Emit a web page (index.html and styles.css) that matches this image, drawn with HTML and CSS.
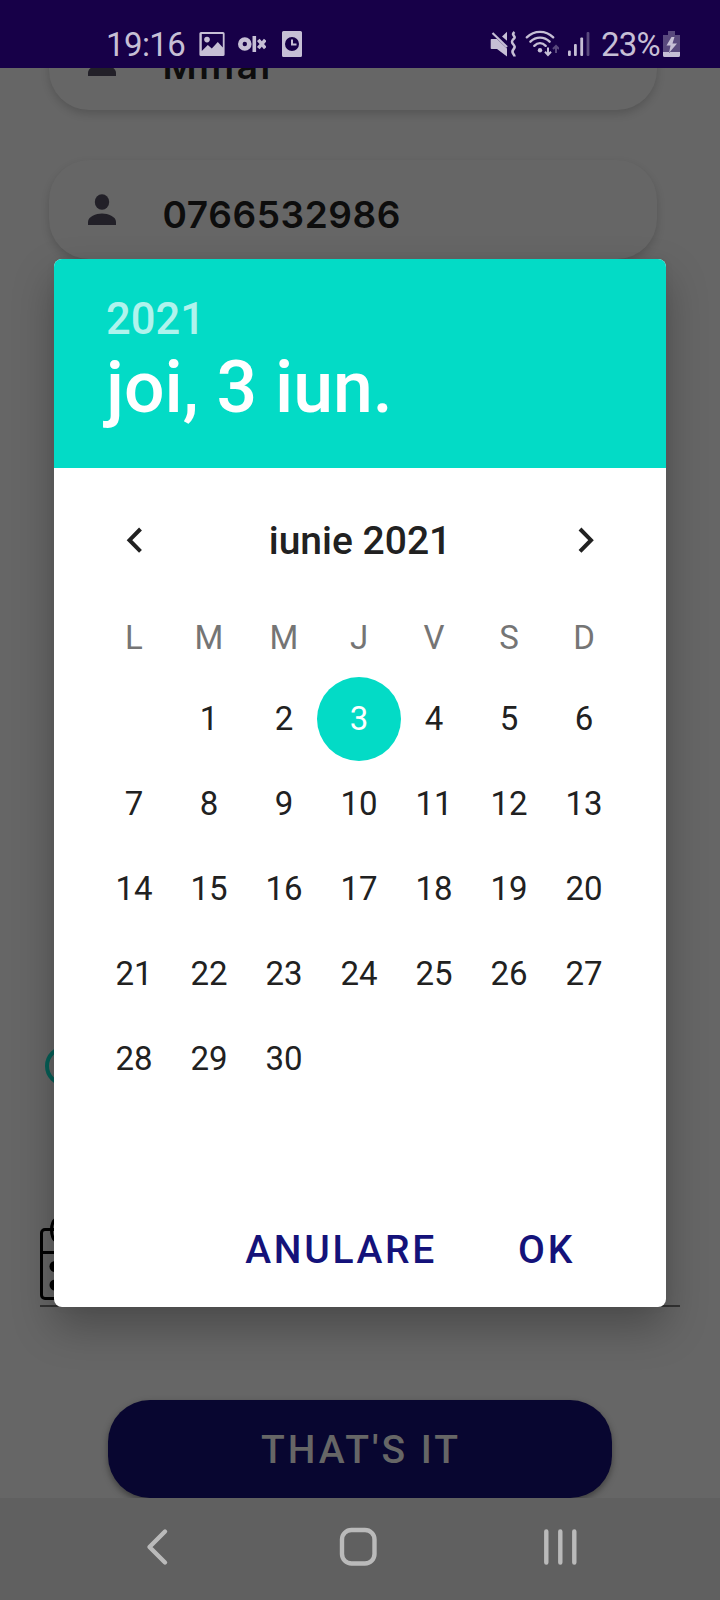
FILE: index.html
```html
<!DOCTYPE html>
<html lang="ro">
<head>
<meta charset="utf-8">
<title>iunie 2021</title>
<link rel="stylesheet" href="styles.css">
</head>
<body>
<div class="screen">
  <header class="status">
    <span class="clock">19:16</span>
    <svg class="st-picture" width="26" height="26" viewBox="0 0 26 26"><path fill-rule="evenodd" d="M2 1h22a1.6 1.6 0 0 1 1.600 1.600v20.800a1.600 1.600 0 0 1-1.600 1.600H2a1.600 1.600 0 0 1-1.600-1.600V2.600A1.600 1.600 0 0 1 2 1zm.800 2v17l6-6 4 3.600 6-6.600 5 5.500V3z"/><circle cx="8" cy="8.600" r="2.800"/></svg>
    <svg class="st-olx" width="28" height="18" viewBox="0 0 28 18"><circle cx="6.800" cy="9" r="4.500" fill="none" stroke="currentColor" stroke-width="4.600"/><path d="M14.500 1h3.600v16h-3.600z"/><path d="M20.300 4.800l7 8.400m0-8.400l-7 8.400" fill="none" stroke="currentColor" stroke-width="3.500"/></svg>
    <svg class="st-watch" width="20" height="26" viewBox="0 0 20 26"><path fill-rule="evenodd" d="M1.500 0h17A1.500 1.500 0 0 1 20 1.500v23a1.500 1.500 0 0 1-1.500 1.500h-17A1.500 1.500 0 0 1 0 24.500v-23A1.500 1.500 0 0 1 1.500 0zM10 6a7 7 0 1 0 0 14a7 7 0 0 0 0-14z"/><path d="M10 8.500v5h4.500" fill="none" stroke="currentColor" stroke-width="2"/></svg>
    <span class="spacer"></span>
    <svg class="st-mute" width="28" height="28" viewBox="0 0 28 28"><path d="M1.500 9h5.500L17 18.500V26.500L7 19H1.500a.8.8 0 0 1-.8-.8V9.800a.8.800 0 0 1 .8-.8zM12 6.500l5-4.700v9z"/><path d="M2.500 3l14.500 14" fill="none" stroke="currentColor" stroke-width="2.200"/><path d="M24.500 2c-4 3 1.500 4 0 6s-4 3-1.500 6 2 3 0 6 1.500 4 1.500 6.500" fill="none" stroke="currentColor" stroke-width="2.600"/></svg>
    <svg class="st-wifi" width="34" height="28" viewBox="0 0 34 28"><g fill="none" stroke="currentColor" stroke-width="2.400" stroke-linecap="round"><path d="M1.800 7.300c7.500-7.300 18.900-7.300 26.400 0M5.400 11.700c5.500-5.400 13.700-5.400 19.200 0M9.300 15.800c3.500-3.400 7.900-3.400 11.400 0"/></g><circle cx="15" cy="20.300" r="2.200"/><path d="M23 17.500v7.500m-3-3.200l3 3.200 3-3.200" fill="none" stroke="currentColor" stroke-width="2"/><path class="dim" d="M31 23v-7m-3 3l3-3 3 3" fill="none" stroke="currentColor" stroke-width="2"/></svg>
    <svg class="st-signal" width="22" height="26" viewBox="0 0 22 26"><rect y="19.500" width="2.800" height="5.500" rx="1"/><rect x="6" y="13" width="2.800" height="12" rx="1"/><rect x="12.300" y="6.500" width="2.800" height="18.500" rx="1"/><rect class="dim" x="18.600" y="1" width="2.800" height="24" rx="1"/></svg>
    <span class="percent">23%</span>
    <svg class="st-battery" width="18" height="26" viewBox="0 0 18 26"><path class="dim" d="M5 0h7v4h5v17H0V4h5z"/><path d="M0 21h17v3.500a1.500 1.500 0 0 1-1.500 1.500h-14A1.500 1.500 0 0 1 0 24.500zM8.500 6L3.500 14.500h4L6 22l8-9.500H9.500L11.500 6z"/></svg>
  </header>

  <main class="form">
    <div class="card">
      <svg class="person" width="30" height="34" viewBox="0 0 30 34"><ellipse cx="15" cy="9" rx="7.200" ry="7.800"/><path d="M1 32v-3c0-5.500 8-8.500 14-8.500s14 3 14 8.500v3z"/></svg>
      <span class="value name">Mihai</span>
    </div>
    <div class="card">
      <svg class="person" width="30" height="34" viewBox="0 0 30 34"><ellipse cx="15" cy="9" rx="7.200" ry="7.800"/><path d="M1 32v-3c0-5.500 8-8.500 14-8.500s14 3 14 8.500v3z"/></svg>
      <span class="value">0766532986</span>
    </div>
    <div class="radio"></div>
    <div class="date-field">
      <svg width="78" height="84" viewBox="0 0 78 84"><g fill="none" stroke="currentColor" stroke-width="3"><rect x="1.500" y="11.500" width="74" height="69" rx="3.500"/><path d="M2 34.500h74"/><ellipse cx="16" cy="12" rx="4.500" ry="10.500"/></g><circle cx="15" cy="48.500" r="5.500"/><circle cx="15" cy="67" r="5.500"/></svg>
    </div>
    <button class="submit">THAT'S IT</button>
  </main>

  <nav class="navbar">
    <svg width="40" height="40" viewBox="0 0 40 40"><path d="M28 4.500L12.500 20 28 35.500"/></svg>
    <svg width="40" height="40" viewBox="0 0 40 40"><rect x="3" y="3" width="32.500" height="33.500" rx="9.500"/></svg>
    <svg width="40" height="40" viewBox="0 0 40 40"><path d="M6.300 4.500v31M20.300 4.500v31M34.300 4.500v31"/></svg>
  </nav>

  <section class="dialog">
    <div class="banner">
      <div class="year">2021</div>
      <div class="date">joi, 3 iun.</div>
    </div>
    <div class="month">
      <svg width="20" height="28" viewBox="0 0 20 28"><path d="M17.500 3L6.500 14.200 17.500 25.400"/></svg>
      <span>iunie 2021</span>
      <svg width="20" height="28" viewBox="0 0 20 28"><path d="M3 3L14 14.200 3 25.400"/></svg>
    </div>
    <div class="grid weekdays"><span>L</span><span>M</span><span>M</span><span>J</span><span>V</span><span>S</span><span>D</span></div>
    <div class="grid days">
      <span></span><span>1</span><span>2</span><span class="selected">3</span><span>4</span><span>5</span><span>6</span>
      <span>7</span><span>8</span><span>9</span><span>10</span><span>11</span><span>12</span><span>13</span>
      <span>14</span><span>15</span><span>16</span><span>17</span><span>18</span><span>19</span><span>20</span>
      <span>21</span><span>22</span><span>23</span><span>24</span><span>25</span><span>26</span><span>27</span>
      <span>28</span><span>29</span><span>30</span>
    </div>
    <div class="actions"><button>ANULARE</button><button>OK</button></div>
  </section>
</div>
</body>
</html>
```
FILE: styles.css
```css
* { box-sizing: border-box; }
body { margin: 0; font-family: Roboto, sans-serif; }
button { border: 0; padding: 0; background: none; font: inherit; }
svg { display: block; flex: none; fill: currentColor; }

.screen {
  position: relative;
  display: flex;
  flex-direction: column;
  width: 720px;
  height: 1600px;
  overflow: hidden;
  background: #666;
}

/* Status bar */
.status {
  display: flex;
  align-items: center;
  flex: none;
  height: 68px;
  padding: 20px 39px 0 106px;
  background: #170048;
  color: #c6bfd5;
  font-size: 33px;
  line-height: 40px;
}
.clock { width: 93px; padding-top: 2px; letter-spacing: -.6px; }
.st-olx { margin-left: 13px; }
.st-watch { margin-left: 16px; }
.spacer { flex: 1; }
.st-wifi { margin-left: 7px; }
.st-signal { margin-left: 9px; }
.percent { margin-left: 11px; padding-top: 2px; width: 62px; white-space: nowrap; letter-spacing: -.8px; }
.dim { opacity: .38; }

/* Form behind the dialog */
.form {
  display: flex;
  flex-direction: column;
  flex: none;
  height: 1430px;
  overflow: hidden;
  padding: 0 40px;
}
.card {
  display: flex;
  align-items: center;
  flex: none;
  width: 608px;
  height: 99px;
  margin: 0 0 50px 8.5px;
  padding-left: 38px;
  border-radius: 40px;
  background: #666;
  box-shadow: 0 4px 8px rgba(0, 0, 0, .16);
}
.card:first-child { margin-top: -57px; }
.person { color: #222028; }
.value {
  margin: 10px 0 0 46px;
  color: #0d0d0d;
  font: 600 37px/44px Inter, sans-serif;
  letter-spacing: .6px;
}
.name { letter-spacing: 2.6px; }
.radio {
  flex: none;
  width: 40px;
  height: 40px;
  margin: 737px 0 0 5px;
  border: 4px solid #065f57;
  border-radius: 50%;
}
.date-field {
  flex: none;
  height: 89px;
  margin-top: 132px;
  border-bottom: 2px solid #333;
  color: #000;
}
.submit {
  flex: none;
  height: 98px;
  margin: 93px 68px 0;
  padding-top: 2px;
  border-radius: 42px;
  background: #080630;
  color: #666;
  font-size: 39px;
  font-weight: 500;
  letter-spacing: 3px;
  text-indent: 2px;
  box-shadow: 0 3px 7px rgba(0, 0, 0, .4);
}

/* System navigation */
.navbar {
  position: relative;
  display: flex;
  align-items: center;
  justify-content: space-between;
  flex: none;
  height: 102px;
  padding: 0 140px 4px 137px;
  background: #606060;
  color: #bababa;
}
.navbar svg { fill: none; stroke: currentColor; stroke-width: 4.4; stroke-linecap: round; stroke-linejoin: round; }

/* Date picker */
.dialog {
  position: absolute;
  left: 54px;
  top: 259px;
  display: flex;
  flex-direction: column;
  width: 612px;
  height: 1048px;
  border-radius: 8px;
  background: #fff;
  color: #212121;
  box-shadow: 0 20px 42px rgba(0, 0, 0, .27), 0 0 10px rgba(0, 0, 0, .05);
}
.banner {
  height: 209px;
  padding: 34px 52px 0;
  border-radius: 8px 8px 0 0;
  background: #03dbc6;
  color: #fff;
  font-weight: 500;
}
.year { font-size: 43.5px; line-height: 53px; color: rgba(255, 255, 255, .7); }
.date { font-size: 71.5px; line-height: 84px; }
.month {
  display: flex;
  align-items: center;
  justify-content: space-between;
  height: 130px;
  padding: 14px 69px 0;
  font-size: 39px;
  font-weight: 500;
}
.month span { padding-top: 2px; }
.month svg { fill: none; stroke: currentColor; stroke-width: 4; }
.grid {
  display: grid;
  grid-template-columns: repeat(7, 75px);
  justify-content: center;
  margin-right: 2px;
  font-size: 33px;
}
.grid span { display: flex; align-items: center; justify-content: center; }
.weekdays { height: 78px; padding-top: 1px; color: #757575; }
.days { grid-auto-rows: 85px; }
.days span { padding-bottom: 1px; }
.days .selected {
  width: 84px;
  height: 84px;
  place-self: center;
  border-radius: 50%;
  background: #03dbc6;
  color: #fff;
}
.actions {
  display: flex;
  justify-content: flex-end;
  gap: 81px;
  margin-top: auto;
  padding: 0 91px 34px 0;
  color: #14127a;
  font-size: 39px;
  font-weight: 500;
  line-height: 46px;
}
.actions button { color: inherit; letter-spacing: 2.7px; }
```
